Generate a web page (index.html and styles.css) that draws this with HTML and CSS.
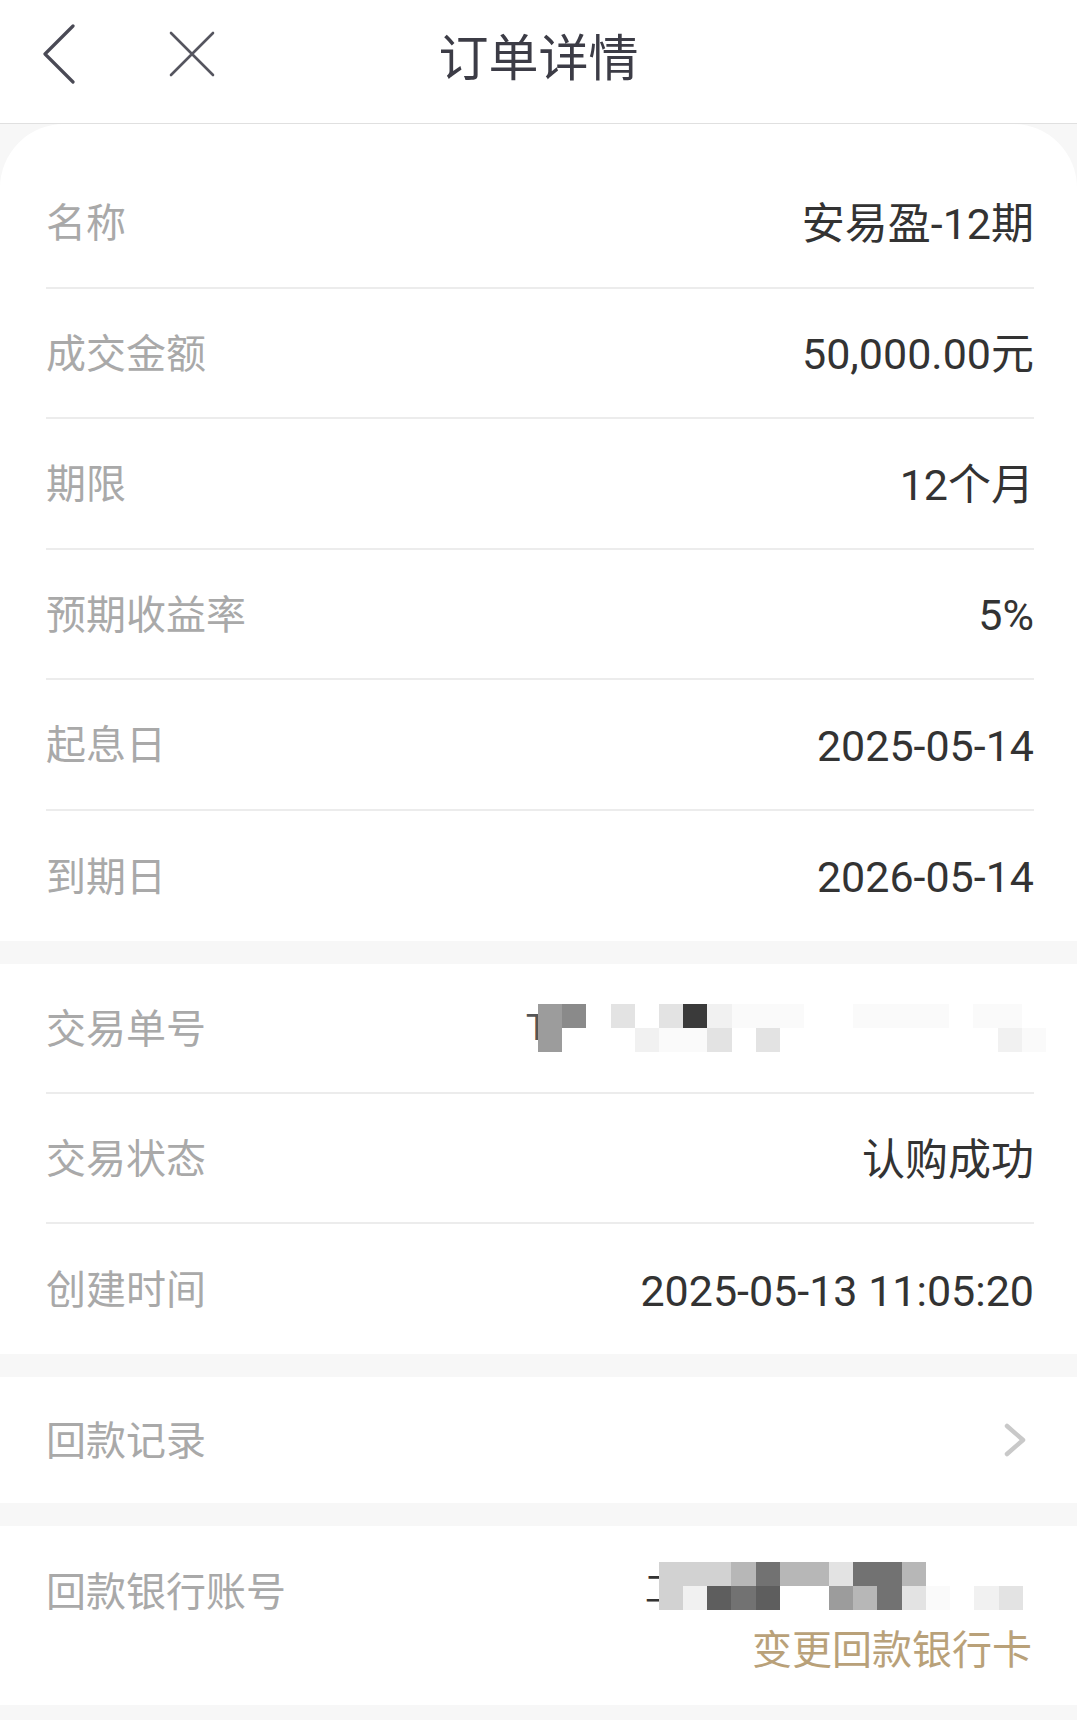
FILE: index.html
```html
<!DOCTYPE html>
<html lang="zh-CN">
<head>
  <meta charset="UTF-8">
  <meta name="viewport" content="width=device-width, initial-scale=1.0">
  <title>订单详情</title>
  <link rel="stylesheet" href="styles.css">
</head>
<body>
  <header class="topbar">
    <div class="nav-left">
      <svg class="icon-back" width="32" height="60" viewBox="0 0 32 60">
        <path d="M30 2 L2 30 L30 58" fill="none" stroke="#4a4a55" stroke-width="3.2" stroke-linecap="round" stroke-linejoin="round"/>
      </svg>
      <svg class="icon-close" width="46" height="46" viewBox="0 0 46 46">
        <path d="M2 2 L44 44 M44 2 L2 44" fill="none" stroke="#55555f" stroke-width="2.6" stroke-linecap="round"/>
      </svg>
    </div>
    <h1 class="title">订单详情</h1>
    <div></div>
  </header>

  <section class="card card-main">
    <div class="row"><span class="label">名称</span><span class="value">安易盈-12期</span></div>
    <div class="row"><span class="label">成交金额</span><span class="value">50,000.00元</span></div>
    <div class="row"><span class="label">期限</span><span class="value">12个月</span></div>
    <div class="row"><span class="label">预期收益率</span><span class="value">5%</span></div>
    <div class="row"><span class="label">起息日</span><span class="value">2025-05-14</span></div>
    <div class="row"><span class="label">到期日</span><span class="value">2026-05-14</span></div>
  </section>

  <section class="card">
    <div class="row">
      <span class="label">交易单号</span>
      <span class="masked masked-order">
        <span class="masked-char">T</span>
        <span class="mosaic mosaic-21">
          <i class="s6"></i><i class="s7"></i><i></i><i class="s3"></i><i></i><i class="s3"></i><i class="s10"></i><i class="s2"></i><i class="s1"></i><i class="s1"></i><i class="s1"></i><i></i><i></i><i class="s1"></i><i class="s1"></i><i class="s1"></i><i class="s1"></i><i></i><i class="s1"></i><i class="s1"></i><i></i>
          <i class="s6"></i><i></i><i></i><i></i><i class="s2"></i><i class="s1"></i><i class="s1"></i><i class="s3"></i><i></i><i class="s3"></i><i></i><i></i><i></i><i></i><i></i><i></i><i></i><i></i><i></i><i class="s2"></i><i class="s1"></i>
        </span>
      </span>
    </div>
    <div class="row"><span class="label">交易状态</span><span class="value">认购成功</span></div>
    <div class="row"><span class="label">创建时间</span><span class="value">2025-05-13 11:05:20</span></div>
  </section>

  <section class="card">
    <div class="row row-link">
      <span class="label">回款记录</span>
      <svg class="icon-more" width="22" height="34" viewBox="0 0 22 34">
        <path d="M3 3 L19 17 L3 31" fill="none" stroke="#c9c9c9" stroke-width="4.5" stroke-linecap="round" stroke-linejoin="round"/>
      </svg>
    </div>
  </section>

  <section class="card card-bank">
    <div class="bank-line">
      <span class="label">回款银行账号</span>
      <span class="masked masked-bank">
        <span class="masked-char">工</span>
        <span class="mosaic mosaic-15">
          <i class="s4"></i><i class="s4"></i><i class="s4"></i><i class="s5"></i><i class="s8"></i><i class="s5"></i><i class="s5"></i><i class="s3"></i><i class="s8"></i><i class="s8"></i><i class="s5"></i><i></i><i></i><i></i><i></i>
          <i class="s4"></i><i class="s2"></i><i class="s9"></i><i class="s8"></i><i class="s9"></i><i></i><i></i><i class="s6"></i><i class="s5"></i><i class="s8"></i><i class="s3"></i><i class="s1"></i><i></i><i class="s2"></i><i class="s3"></i>
        </span>
      </span>
    </div>
    <div class="bank-action"><span class="change-link">变更回款银行卡</span></div>
  </section>
</body>
</html>
```

FILE: styles.css
```css
body {
  margin: 0;
  background-color: #f7f7f7;
  font-family: "Noto Sans CJK SC", sans-serif;
}

.topbar {
  height: 124px;
  box-sizing: border-box;
  padding-bottom: 16px;
  background-color: #fff;
  border-bottom: 1px solid #e0e0e0;
  display: grid;
  grid-template-columns: 1fr auto 1fr;
  align-items: center;
}

.nav-left {
  display: flex;
  align-items: center;
  gap: 94px;
  padding-left: 43px;
}

.nav-left svg {
  display: block;
}

.title {
  margin: 0;
  font-size: 50px;
  font-weight: 400;
  line-height: 1;
  color: #3c3c46;
}

.card {
  background-color: #fff;
  margin-top: 23px;
}

.card-main {
  margin-top: 0;
  padding-top: 34px;
  border-radius: 64px 64px 0 0;
}

.row {
  height: 130px;
  box-sizing: border-box;
  margin: 0 43px 0 46px;
  border-bottom: 2px solid #ececec;
  display: flex;
  align-items: center;
  justify-content: space-between;
}

.card-main .row {
  height: 130.5px;
}

.row:last-child {
  border-bottom: none;
}

.label {
  font-size: 40px;
  color: #a9a9a9;
  line-height: 50px;
  padding-bottom: 4px;
}

.value {
  font-family: Roboto, "Noto Sans CJK SC", sans-serif;
  font-size: 43px;
  color: #333;
  line-height: 50px;
  padding-top: 3px;
}

.row-link {
  height: 126px;
}

.icon-more {
  margin-right: 8px;
}

.masked {
  display: flex;
  align-items: center;
}

.masked-char {
  font-family: "Liberation Sans", sans-serif;
  font-size: 36px;
  color: #555;
  font-weight: 300;
}

.masked-order {
  margin-right: -12px;
}

.masked-order .masked-char {
  margin-right: -10px;
}

.masked-bank {
  margin-right: 11px;
  margin-top: -10px;
}

.masked-bank .masked-char {
  margin-right: -20px;
  font-size: 34px;
  color: #333;
}

.mosaic {
  display: grid;
  grid-auto-rows: 24px;
}

.mosaic-21 {
  grid-template-columns: repeat(21, 24.2px);
}

.mosaic-15 {
  grid-template-columns: repeat(15, 24.3px);
}

.mosaic i {
  display: block;
}

.s1 { background-color: #fafafa; }
.s2 { background-color: #f1f1f1; }
.s3 { background-color: #e3e3e3; }
.s4 { background-color: #d2d2d2; }
.s5 { background-color: #b7b7b7; }
.s6 { background-color: #9c9c9c; }
.s7 { background-color: #8a8a8a; }
.s8 { background-color: #727272; }
.s9 { background-color: #5e5e5e; }
.s10 { background-color: #3a3a3a; }

.card-bank {
  padding: 38px 43px 33px 46px;
}

.bank-line {
  display: flex;
  align-items: center;
  justify-content: space-between;
}

.bank-action {
  display: flex;
  justify-content: flex-end;
  margin-top: 4px;
}

.change-link {
  font-size: 40px;
  line-height: 50px;
  color: #b9a179;
  margin-right: 2px;
}
```
